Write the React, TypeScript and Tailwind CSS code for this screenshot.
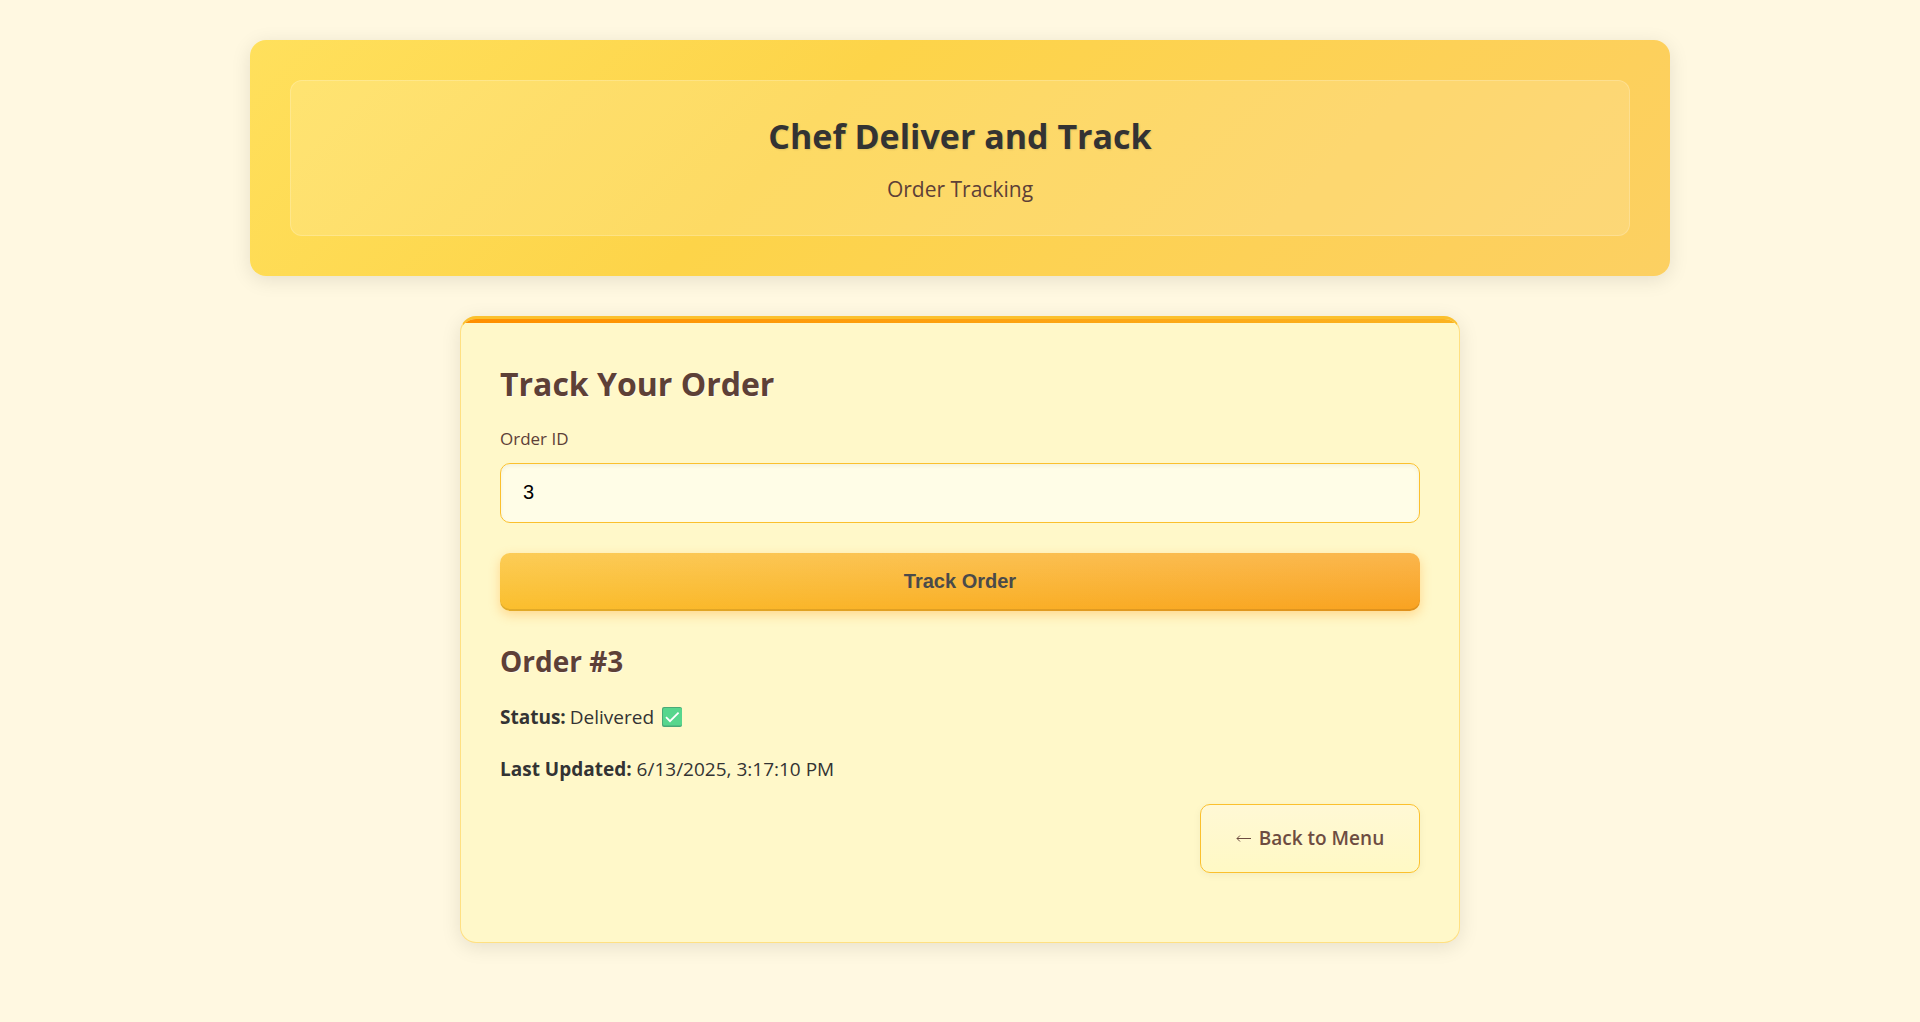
import { useState } from "react";

function DeliveredIcon() {
  return (
    <svg viewBox="0 0 20 20" className="ml-2 size-5" role="img" aria-label="Delivered">
      <rect width="20" height="20" rx="2" fill="#4aa978" />
      <rect x="1" y="1" width="19" height="17.5" rx="1.5" fill="#57d68d" />
      <path d="M4 10.2 8 14.2 16.6 5.6" fill="none" stroke="#fff" strokeWidth="1.8" />
    </svg>
  );
}

function Header() {
  return (
    <header className="rounded-2xl bg-[linear-gradient(135deg,#ffe05c_0%,#fdd449_39%,#fdd05c_85%,#fcd062_100%)] p-10 shadow-[0_4px_20px_rgba(0,0,0,0.1)]">
      <div className="rounded-xl border border-white/20 bg-white/15 px-8 pt-8 pb-7 text-center">
        <h1 className="text-[34px] leading-[46px] font-bold text-[#333333] [text-shadow:1px_1px_2px_rgba(0,0,0,0.1)]">
          Chef Deliver and Track
        </h1>
        <p className="mt-3 text-[21px] leading-9 font-medium text-[#5d4037]">Order Tracking</p>
      </div>
    </header>
  );
}

function TrackingCard() {
  const [orderId, setOrderId] = useState("3");

  return (
    <main className="mx-auto mt-10 max-w-[1000px] overflow-hidden rounded-2xl border border-t-[3px] border-[#ffe082] border-t-[#fbc02d] bg-[#fff8c9] shadow-[0_4px_20px_rgba(0,0,0,0.1)]">
      <div className="h-1 bg-[linear-gradient(90deg,#ff8f00,#fbb321)]" />
      <div className="px-[39px] pt-9 pb-[69px]">
        <h2 className="text-[32px] leading-[50px] font-bold text-[#5d4037] [text-shadow:1px_1px_0_rgba(255,255,255,0.5)]">
          Track Your Order
        </h2>
        <form onSubmit={(event) => event.preventDefault()}>
          <label htmlFor="order-id" className="mt-4 block text-[17px] leading-7 font-medium text-[#5d4037]">
            Order ID
          </label>
          <input
            id="order-id"
            type="text"
            value={orderId}
            onChange={(event) => setOrderId(event.target.value)}
            className="mt-2.5 block h-15 w-full rounded-[10px] border border-[#fbc02d] bg-[#fffde7] px-[22px] pb-0.5 font-['Liberation_Sans',Arial,sans-serif] text-[20px] text-black shadow-[inset_0_2px_4px_rgba(0,0,0,0.05)] outline-none"
          />
          <button
            type="submit"
            className="mt-[30px] block h-[58px] w-full rounded-[10px] bg-[linear-gradient(180deg,rgba(255,255,255,0.2),rgba(255,255,255,0)),linear-gradient(135deg,#fbc02d,#f9a220)] pb-0.5 font-['Liberation_Sans',Arial,sans-serif] text-[20px] font-bold text-[#4a4a4a] shadow-[0_4px_12px_rgba(255,143,0,0.3),inset_0_-2px_0_rgba(0,0,0,0.1)]"
          >
            Track Order
          </button>
        </form>
        <section>
          <h3 className="mt-[30px] text-[28px] leading-10 font-bold text-[#5d4037] [text-shadow:1px_1px_0_rgba(255,255,255,0.5)]">
            Order #3
          </h3>
          <p className="mt-5 flex items-center text-[19px] leading-8 text-[#333333]">
            <strong className="mr-1 font-bold">Status:</strong>
            Delivered
            <DeliveredIcon />
          </p>
          <p className="mt-5 text-[19px] leading-8 text-[#333333]">
            <strong className="font-bold">Last Updated:</strong> 6/13/2025, 3:17:10 PM
          </p>
        </section>
        <div className="mt-[19px] flex justify-end">
          <a
            href="#menu"
            className="flex h-[69px] w-[220px] items-center justify-center gap-2 rounded-[10px] border border-[#fbc02d] bg-[linear-gradient(180deg,#fff8d5,#fff9c4)] text-[19px] font-semibold text-[#6d4c41] shadow-[0_2px_8px_rgba(0,0,0,0.05)]"
          >
            <svg viewBox="0 0 15 9" className="h-[9px] w-[15px]" fill="none" stroke="currentColor" aria-hidden="true">
              <path d="M15 4.5H1M4 1.5l-3 3 3 3" />
            </svg>
            Back to Menu
          </a>
        </div>
      </div>
    </main>
  );
}

export default function App() {
  return (
    <div className="min-h-screen bg-[#fff8e1] px-10 py-10 font-['Open_Sans','Noto_Sans',sans-serif]">
      <div className="mx-auto max-w-[1420px]">
        <Header />
        <TrackingCard />
      </div>
    </div>
  );
}
